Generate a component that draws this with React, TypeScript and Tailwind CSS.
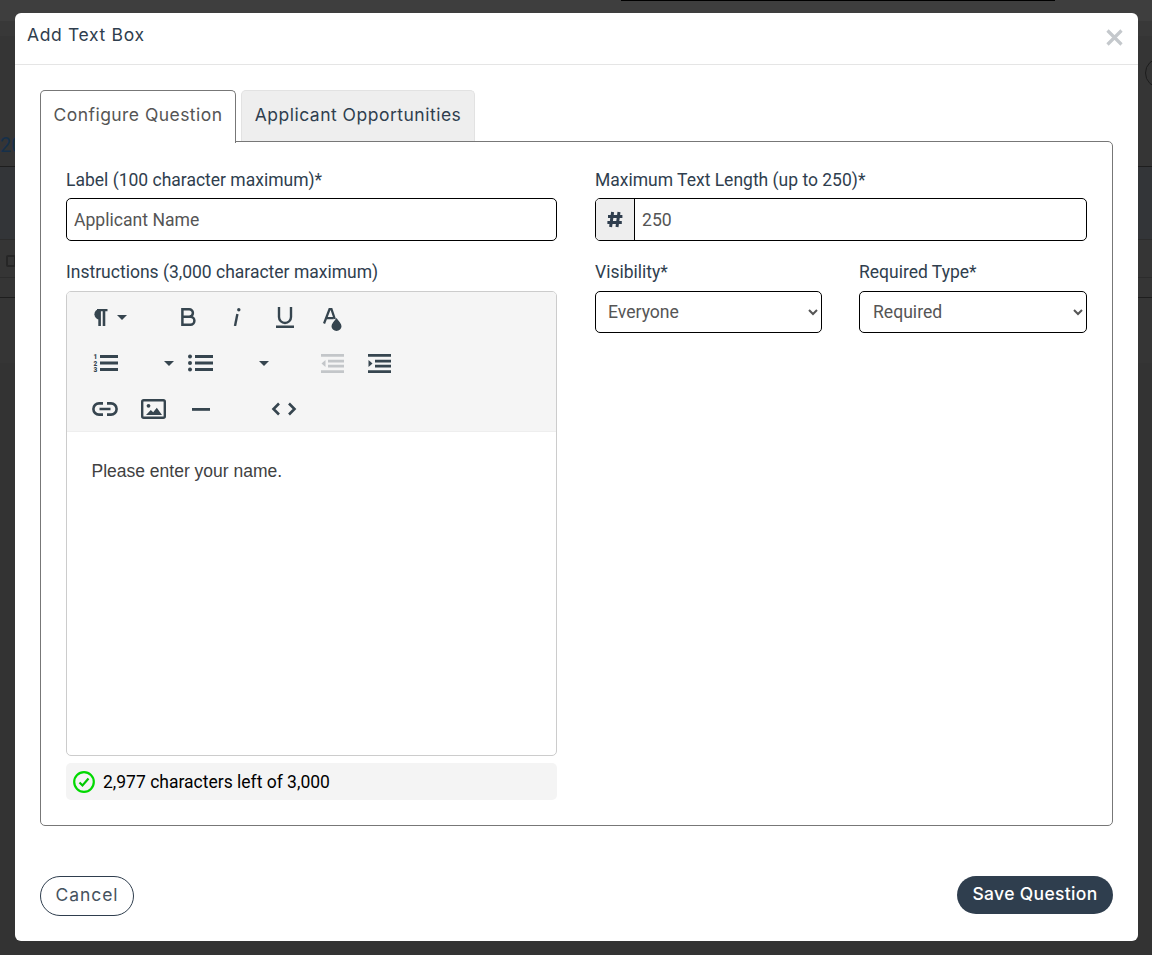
const roboto = "font-['Roboto',sans-serif]";
const pop = "font-['Inter',sans-serif]";
const ic = "#36454f";

function Caret() {
  return <svg width="10" height="5" viewBox="0 0 10 5"><path d="M0 0h10L5 5z" fill={ic} /></svg>;
}

function Btn({ w, ml, children }: { w: string; ml?: string; children: React.ReactNode }) {
  return <div className={`flex h-[46px] items-center justify-center ${w} ${ml ?? ""}`}>{children}</div>;
}

function ListLines({ x = 7, color = ic }: { x?: number; color?: string }) {
  return (
    <g stroke={color} strokeWidth="2.8">
      <path d={`M${x} 3.5H25M${x} 10H25M${x} 16.5H25`} />
    </g>
  );
}

function Label({ children }: { children: React.ReactNode }) {
  return <label className={`block h-[25px] text-[17.5px] leading-[26px] text-[#2f3e4e] ${roboto}`}>{children}</label>;
}

function Choice({ value, options, pl }: { value: string; options: string[]; pl: string }) {
  return (
    <select
      defaultValue={value}
      className={`h-[42px] w-full rounded-[5px] border border-black bg-white ${pl} text-[17.6px] text-[#555] appearance-auto ${roboto}`}
    >
      {options.map((o) => (
        <option key={o}>{o}</option>
      ))}
    </select>
  );
}

export default function App() {
  return (
    <div className="relative h-[955px] w-full overflow-hidden bg-[#353535] pt-[13px] pl-[15px]">
      <div className="absolute inset-x-0 top-0 h-[21px] bg-[#3e3e3e]" />
      <div className="absolute inset-x-0 top-[21px] h-[15px] bg-[#383838]" />
      <div className="absolute inset-x-0 top-[166px] h-[73px] bg-[#333538]" />
      <div className="absolute inset-x-0 top-[166px] h-px bg-[#1e1e1e]" />
      <div className="absolute inset-x-0 top-[239px] h-px bg-[#2c2c2c]" />
      <div className="absolute inset-x-0 top-[277px] h-px bg-[#2c2c2c]" />
      <div className="absolute inset-x-0 top-[297px] h-px bg-[#1e1e1e]" />
      <div className="absolute inset-x-0 top-[363px] h-[592px] bg-[#333333]" />
      <div className="absolute left-[621px] top-0 h-[1px] w-[434px] bg-black" />
      <div className="absolute left-0 top-[130px] text-[20px] text-[#16304a] font-['Roboto',sans-serif]">20</div>
      <div className="absolute left-[6px] top-[255px] h-[12px] w-[10px] rounded-[2px] border-2 border-[#262626]" />
      <div className="absolute left-[1145px] top-[58px] h-[30px] w-[30px] rounded-full border border-[#1c1c1c]" />

      <div className="relative flex h-[928px] w-[1123px] flex-col rounded-[6px] bg-white">
        <div className="relative h-[52px] border-b border-[#e5e5e5] pl-[12px] pt-[9px]">
          <h1 className={`text-[17.5px] leading-[26px] tracking-[0.65px] text-[#2f3e4e] ${pop}`}>Add Text Box</h1>
          <svg className="absolute left-[1091px] top-[16px]" width="17" height="17" viewBox="0 0 17 17">
            <path d="M1.5 1.5l14 14M15.5 1.5l-14 14" stroke="#c4c8cc" strokeWidth="3.2" />
          </svg>
        </div>

        <div className="flex flex-1 flex-col px-[25px]">
          <div className="mt-[25px] flex h-[52px] items-start">
            <div className={`relative z-10 flex h-[53px] w-[196px] items-center justify-center rounded-t-[5px] border border-b-0 border-[#777] bg-white pb-[3px] text-[17.5px] tracking-[0.45px] text-[#555] ${pop}`}>
              Configure Question
            </div>
            <div className={`ml-[5px] flex h-[52px] w-[234px] items-center justify-center rounded-t-[5px] border border-b-0 border-[#e2e2e2] bg-[#eeeeee] pb-[2px] text-[17.5px] tracking-[0.5px] text-[#2f3e4e] ${pop}`}>
              Applicant Opportunities
            </div>
          </div>

          <div className="-mt-[1px] grid h-[685px] w-[1073px] grid-cols-[491px_492px] gap-x-[38px] rounded-[5px] rounded-tl-none border border-[#777] px-[25px] pt-[25px]">
            <div>
              <Label>Label (100 character maximum)*</Label>
              <input
                defaultValue="Applicant Name"
                className={`mt-[6px] block h-[43px] w-full rounded-[5px] border border-black px-[7px] text-[17.6px] text-[#555] ${roboto}`}
              />
              <div className="mt-[18px]">
                <Label>Instructions (3,000 character maximum)</Label>
              </div>
              <div className="mt-[7px] h-[465px] overflow-hidden rounded-[5px] border border-[#cccccc]">
                <div className="h-[139px] bg-[#f5f5f5] pl-[14px] pt-[2px]">
                  <div className="flex">
                    <div className="flex h-[46px] w-[83px] items-center">
                      <span className="ml-[11px] flex">
                        <svg width="16" height="17" viewBox="0 0 16 17">
                          <path d="M5 1H15.5M7.6 1V17M12 1V17" stroke={ic} strokeWidth="2.6" fill="none" />
                          <path d="M7.6 0a5.2 5.2 0 0 0 0 10.4z" fill={ic} />
                        </svg>
                      </span>
                      <span className="ml-[9px] flex"><Caret /></span>
                    </div>
                    <Btn w="w-[48px]">
                      <svg width="15" height="18" viewBox="0 0 15 18">
                        <path d="M1.4 1.3h6.8a3.6 3.6 0 0 1 0 7.4H1.4zM1.4 8.7h8a3.9 3.9 0 0 1 0 8H1.4z" fill="none" stroke={ic} strokeWidth="2.5" />
                      </svg>
                    </Btn>
                    <Btn w="w-[49px]">
                      <svg width="8" height="18" viewBox="0 0 8 18">
                        <path d="M4.4 6L2 18" stroke={ic} strokeWidth="2.4" />
                        <circle cx="5.8" cy="1.8" r="1.7" fill={ic} />
                      </svg>
                    </Btn>
                    <Btn w="w-[47px]">
                      <svg width="18" height="21" viewBox="0 0 18 21">
                        <path d="M3 0v10a6 6 0 0 0 12 0V0" fill="none" stroke={ic} strokeWidth="2.4" />
                        <path d="M0 19.7h18" stroke={ic} strokeWidth="2.6" />
                      </svg>
                    </Btn>
                    <Btn w="w-[48px]">
                      <svg width="19" height="23" viewBox="0 0 19 23" className="mt-[4px]">
                        <path d="M1 15.5L6.6 1h1.8L11.8 11M3.3 10.2h7" fill="none" stroke={ic} strokeWidth="2.3" />
                        <path d="M13.5 10c2.6 3.6 5 5.9 5 8.3a5 4.7 0 0 1-10 0c0-2.4 2.4-4.7 5-8.3z" fill={ic} />
                      </svg>
                    </Btn>
                  </div>
                  <div className="flex">
                    <Btn w="w-[48px]" >
                      <svg width="25" height="20" viewBox="0 0 25 20">
                        <ListLines />
                        <text x="0.5" y="6" fontSize="6.5" fontWeight="900" fill={ic} fontFamily="Roboto">1</text>
                        <text x="0.5" y="12.5" fontSize="6.5" fontWeight="900" fill={ic} fontFamily="Roboto">2</text>
                        <text x="0.5" y="19" fontSize="6.5" fontWeight="900" fill={ic} fontFamily="Roboto">3</text>
                      </svg>
                    </Btn>
                    <Btn w="w-[16px]" ml="ml-[32px]"><Caret /></Btn>
                    <Btn w="w-[47px]">
                      <svg width="25" height="20" viewBox="0 0 25 20">
                        <ListLines />
                        <circle cx="2" cy="3.5" r="2" fill={ic} />
                        <circle cx="2" cy="10" r="2" fill={ic} />
                        <circle cx="2" cy="16.5" r="2" fill={ic} />
                      </svg>
                    </Btn>
                    <Btn w="w-[16px]" ml="ml-[32px]"><Caret /></Btn>
                    <Btn w="w-[48px]" ml="ml-[36px]">
                      <svg width="23" height="19" viewBox="0 0 23 19">
                        <path d="M0 1.4H23M7 7.2H23M7 12.2H23M0 17.6H23" stroke="#c3c6c9" strokeWidth="2.8" />
                        <path d="M4.5 6v7L0.5 9.5z" fill="#c3c6c9" />
                      </svg>
                    </Btn>
                    <Btn w="w-[47px]">
                      <svg width="23" height="19" viewBox="0 0 23 19">
                        <path d="M0 1.4H23M7 7.2H23M7 12.2H23M0 17.6H23" stroke={ic} strokeWidth="2.8" />
                        <path d="M0.5 6v7l4-3.5z" fill={ic} />
                      </svg>
                    </Btn>
                  </div>
                  <div className="flex">
                    <Btn w="w-[48px]">
                      <svg width="26" height="14" viewBox="0 0 26 14">
                        <path d="M11 1.4H7a5.6 5.6 0 0 0 0 11.2h4M15 1.4h4a5.6 5.6 0 0 1 0 11.2h-4M7.5 7h11" fill="none" stroke={ic} strokeWidth="2.6" />
                      </svg>
                    </Btn>
                    <Btn w="w-[48px]">
                      <svg width="25" height="20" viewBox="0 0 25 20">
                        <rect x="1.2" y="1.2" width="22.6" height="17.6" rx="1.5" fill="none" stroke={ic} strokeWidth="2.4" />
                        <circle cx="7.5" cy="6.8" r="1.9" fill={ic} />
                        <path d="M5 16l4.8-5 2.4 2.2 3.6-4.4L21 16z" fill={ic} />
                      </svg>
                    </Btn>
                    <Btn w="w-[47px]">
                      <svg width="18" height="3" viewBox="0 0 18 3"><rect width="18" height="2.8" fill={ic} /></svg>
                    </Btn>
                    <Btn w="w-[48px]" ml="ml-[36px]">
                      <svg width="26" height="14" viewBox="0 0 26 14">
                        <path d="M8 1.5L2.5 7 8 12.5M18 1.5L23.5 7 18 12.5" fill="none" stroke={ic} strokeWidth="2.6" />
                      </svg>
                    </Btn>
                  </div>
                </div>
                <div className="border-t border-[#eeeeee] pl-[24.5px] pt-[27px] text-[17.5px] leading-[24px] text-[#414141] font-['Liberation_Sans',sans-serif]">
                  Please enter your name.
                </div>
              </div>
              <div className={`mt-[7px] flex h-[37px] items-center rounded-[5px] bg-[#f4f4f4] pl-[7px] text-[17.5px] text-black ${roboto}`}>
                <svg width="22" height="22" viewBox="0 0 22 22">
                  <circle cx="11" cy="11" r="9.8" fill="none" stroke="#00d900" strokeWidth="2.2" />
                  <path d="M6.5 11.5l3 3 6-7" fill="none" stroke="#00c800" strokeWidth="2.2" />
                </svg>
                <span className="ml-[8px] pt-[1px]">2,977 characters left of 3,000</span>
              </div>
            </div>

            <div>
              <Label>Maximum Text Length (up to 250)*</Label>
              <div className="mt-[6px] flex h-[43px] rounded-[5px] border border-black">
                <div className="flex w-[39px] items-center justify-center rounded-l-[4px] border-r border-black bg-[#eeeeee]">
                  <svg width="16" height="17" viewBox="0 0 16 17">
                    <path d="M5.6 1L3.6 16M12 1L10 16M1 5.6H15.4M0.4 11.4H14.8" fill="none" stroke="#2f3e4e" strokeWidth="3" />
                  </svg>
                </div>
                <input
                  defaultValue="250"
                  className={`min-w-0 flex-1 rounded-r-[4px] px-[7px] pt-[1px] text-[17.6px] text-[#555] ${roboto}`}
                />
              </div>
              <div className="mt-[18px] grid grid-cols-[227px_228px] gap-x-[37px]">
                <div>
                  <Label>Visibility*</Label>
                  <div className="mt-[7px]"><Choice value="Everyone" options={["Everyone", "Staff Only"]} pl="pl-[8px]" /></div>
                </div>
                <div>
                  <Label>Required Type*</Label>
                  <div className="mt-[7px]"><Choice value="Required" options={["Required", "Optional"]} pl="pl-[9px]" /></div>
                </div>
              </div>
            </div>
          </div>

          <div className="mt-[50px] flex w-[1073px] items-start justify-between">
            <button className={`h-[40px] w-[94px] rounded-full border border-[#2f3e4e] bg-white pb-[2px] text-[17.5px] tracking-[0.9px] text-[#46525e] ${pop}`}>Cancel</button>
            <button className={`h-[38px] w-[156px] rounded-full bg-[#2f3e4e] pb-[2px] text-[17.5px] font-medium tracking-[0.33px] text-white ${pop}`}>Save Question</button>
          </div>
        </div>
      </div>
    </div>
  );
}
